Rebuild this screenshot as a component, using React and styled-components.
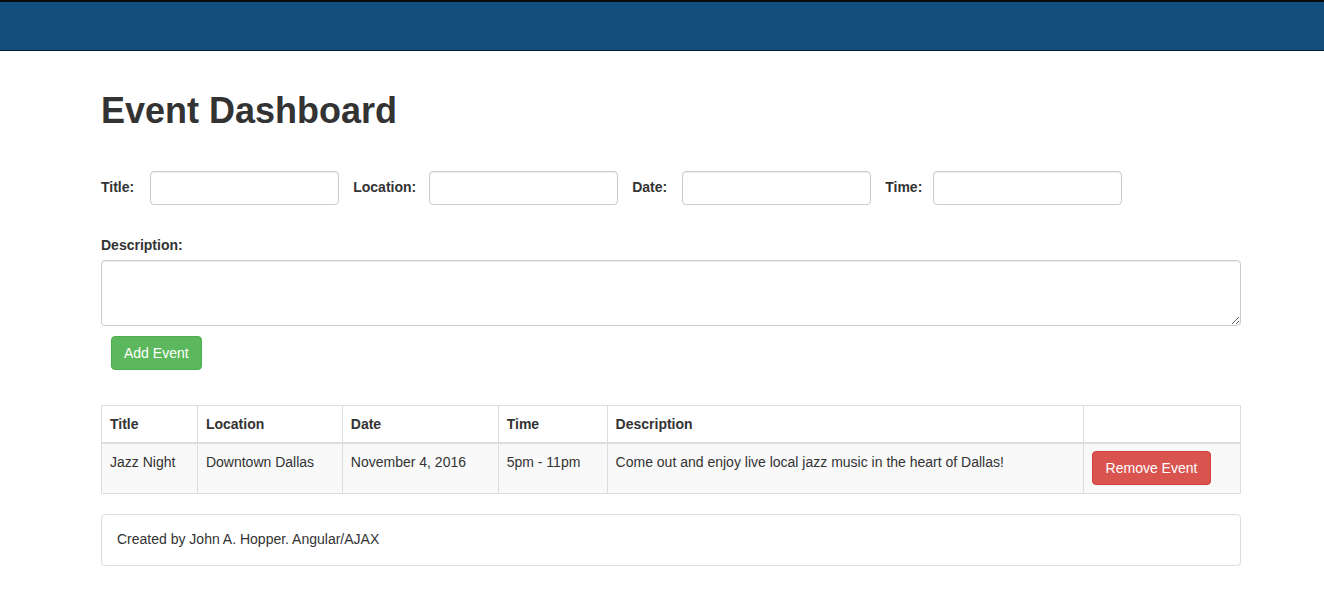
import React from "react";
import styled, { createGlobalStyle } from "styled-components";

const GlobalStyle = createGlobalStyle`
  * { box-sizing: border-box; }
  body {
    margin: 0;
    font-family: "Liberation Sans", Arial, Helvetica, sans-serif;
    font-size: 14px;
    line-height: 1.42857;
    color: #333;
    background: #fff;
  }
`;

const Navbar = styled.div`
  height: 51px;
  background-color: #124f7e;
  border-top: 2px solid #0b0b0b;
  border-bottom: 1px solid #0b1b2a;
`;

const Container = styled.div`
  width: 1140px;
  margin-left: 101px;
  padding-top: 40px;
`;

const Heading = styled.h1`
  margin: 0 0 40px;
  font-size: 36px;
  line-height: 40px;
  font-weight: 700;
`;

const FormRow = styled.div`
  display: flex;
  align-items: center;
  gap: 14px;
  margin-bottom: 31px;
`;

const Field = styled.div`
  display: flex;
  align-items: center;
`;

const Label = styled.label`
  font-weight: 700;
  margin-right: ${(p) => p.$gap || 13}px;
`;

const Input = styled.input`
  width: 189px;
  height: 34px;
  padding: 6px 12px;
  font: inherit;
  border: 1px solid #ccc;
  border-radius: 4px;
  box-shadow: inset 0 1px 1px rgba(0, 0, 0, 0.075);
`;

const BlockLabel = styled.label`
  display: block;
  font-weight: 700;
  margin-bottom: 4px;
`;

const TextArea = styled.textarea`
  display: block;
  width: 100%;
  height: 66px;
  padding: 6px 12px;
  font: inherit;
  border: 1px solid #ccc;
  border-radius: 4px;
  box-shadow: inset 0 1px 1px rgba(0, 0, 0, 0.075);
`;

const Button = styled.button`
  height: 34px;
  padding: 6px 12px;
  font: inherit;
  line-height: 20px;
  vertical-align: middle;
  color: #fff;
  border-radius: 4px;
  border: 1px solid ${(p) => (p.$danger ? "#d43f3a" : "#4cae4c")};
  background-color: ${(p) => (p.$danger ? "#d9534f" : "#5cb85c")};
  cursor: pointer;
`;

const AddButton = styled(Button)`
  display: block;
  margin: 10px 0 0 10px;
`;

const RemoveButton = styled(Button)`
  display: block;
  width: 119px;
  margin-top: -1px;
`;

const Table = styled.table`
  width: 100%;
  margin-top: 35px;
  border-collapse: collapse;
  border: 1px solid #ddd;

  th,
  td {
    padding: 8px;
    border: 1px solid #ddd;
    text-align: left;
    vertical-align: top;
    line-height: 20px;
  }

  th {
    border-bottom: 2px solid #ddd;
  }

  tbody tr {
    background-color: #f9f9f9;
  }
`;

const Footer = styled.div`
  margin-top: 20px;
  padding: 15px;
  border: 1px solid #ddd;
  border-radius: 4px;
  box-shadow: 0 1px 1px rgba(0, 0, 0, 0.05);
`;

const columns = [
  ["Title", 96],
  ["Location", 145],
  ["Date", 156],
  ["Time", 109],
  ["Description", 477],
  ["", 157],
];

const App = () => (
  <>
    <GlobalStyle />
    <Navbar />
    <Container>
      <Heading>Event Dashboard</Heading>
      <FormRow>
        <Field>
          <Label $gap={16}>Title:</Label>
          <Input type="text" />
        </Field>
        <Field>
          <Label $gap={13}>Location:</Label>
          <Input type="text" />
        </Field>
        <Field>
          <Label $gap={15}>Date:</Label>
          <Input type="text" />
        </Field>
        <Field>
          <Label $gap={11}>Time:</Label>
          <Input type="text" />
        </Field>
      </FormRow>
      <BlockLabel>Description:</BlockLabel>
      <TextArea />
      <AddButton>Add Event</AddButton>
      <Table>
        <thead>
          <tr>
            {columns.map(([name, w], i) => (
              <th key={i} style={{ width: w }}>
                {name}
              </th>
            ))}
          </tr>
        </thead>
        <tbody>
          <tr>
            <td>Jazz Night</td>
            <td>Downtown Dallas</td>
            <td>November 4, 2016</td>
            <td>5pm - 11pm</td>
            <td>Come out and enjoy live local jazz music in the heart of Dallas!</td>
            <td>
              <RemoveButton $danger>Remove Event</RemoveButton>
            </td>
          </tr>
        </tbody>
      </Table>
      <Footer>Created by John A. Hopper. Angular/AJAX</Footer>
    </Container>
  </>
);

export default App;
